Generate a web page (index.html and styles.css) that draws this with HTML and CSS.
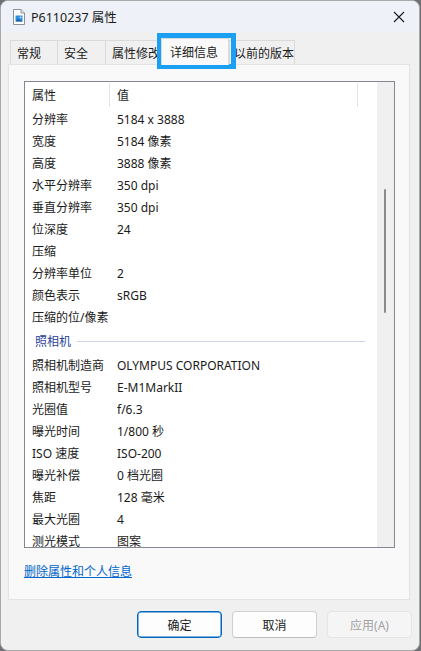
FILE: index.html
```html
<!DOCTYPE html>
<html lang="zh-CN">
<head>
<meta charset="utf-8">
<title>P6110237 属性</title>
<link rel="stylesheet" href="styles.css">
</head>
<body>
<div class="window">
  <div class="titlebar">
    <svg class="app-icon" width="16" height="16" viewBox="0 0 16 16">
      <path d="M2.5 0.5 H10 L13.5 4 V15.5 H2.5 Z" fill="#ffffff" stroke="#8a8f98" stroke-width="1"/>
      <path d="M10 0.5 V4 H13.5" fill="#e9ecf0" stroke="#8a8f98" stroke-width="1"/>
      <rect x="4.5" y="6.5" width="7" height="6" fill="#2f8fdc"/>
      <path d="M4.5 12.5 L7 9.5 L9 11.5 L10 10.5 L11.5 12.5 Z" fill="#1b5fa8"/>
      <circle cx="9.5" cy="8.3" r="0.9" fill="#cfe8ff"/>
    </svg>
    <span class="title">P6110237 属性</span>
    <svg class="close" width="12" height="12" viewBox="0 0 12 12">
      <path d="M1 1 L11 11 M11 1 L1 11" stroke="#1a1a1a" stroke-width="1.1" fill="none"/>
    </svg>
  </div>

  <div class="tabs">
    <div class="tab t1">常规</div>
    <div class="tab t2">安全</div>
    <div class="tab t3">属性修改</div>
    <div class="tab active">详细信息</div>
    <div class="tab t5">以前的版本</div>
  </div>

  <div class="panel">
    <div class="listbox">
      <div class="list-content">
        <div class="list-header">
          <div class="col1 hcell">属性</div>
          <div class="col2 hcell">值</div>
          <div class="hfill"></div>
        </div>
        <div class="row"><span class="col1">分辨率</span><span class="col2">5184 x 3888</span></div>
        <div class="row"><span class="col1">宽度</span><span class="col2">5184 像素</span></div>
        <div class="row"><span class="col1">高度</span><span class="col2">3888 像素</span></div>
        <div class="row"><span class="col1">水平分辨率</span><span class="col2">350 dpi</span></div>
        <div class="row"><span class="col1">垂直分辨率</span><span class="col2">350 dpi</span></div>
        <div class="row"><span class="col1">位深度</span><span class="col2">24</span></div>
        <div class="row"><span class="col1">压缩</span><span class="col2"></span></div>
        <div class="row"><span class="col1">分辨率单位</span><span class="col2">2</span></div>
        <div class="row"><span class="col1">颜色表示</span><span class="col2">sRGB</span></div>
        <div class="row"><span class="col1">压缩的位/像素</span><span class="col2"></span></div>
        <div class="group"><span class="group-label">照相机</span><span class="group-line"></span></div>
        <div class="row"><span class="col1">照相机制造商</span><span class="col2">OLYMPUS CORPORATION</span></div>
        <div class="row"><span class="col1">照相机型号</span><span class="col2">E-M1MarkII</span></div>
        <div class="row"><span class="col1">光圈值</span><span class="col2">f/6.3</span></div>
        <div class="row"><span class="col1">曝光时间</span><span class="col2">1/800 秒</span></div>
        <div class="row"><span class="col1">ISO 速度</span><span class="col2">ISO-200</span></div>
        <div class="row"><span class="col1">曝光补偿</span><span class="col2">0 档光圈</span></div>
        <div class="row"><span class="col1">焦距</span><span class="col2">128 毫米</span></div>
        <div class="row"><span class="col1">最大光圈</span><span class="col2">4</span></div>
        <div class="row"><span class="col1">测光模式</span><span class="col2">图案</span></div>
      </div>
      <div class="scrollbar"><div class="thumb"></div></div>
    </div>
    <a class="link" href="#">删除属性和个人信息</a>
  </div>

  <div class="buttons">
    <button class="btn primary">确定</button>
    <button class="btn">取消</button>
    <button class="btn disabled">应用(A)</button>
  </div>
</div>
<div class="highlight"></div>
</body>
</html>
```

FILE: styles.css
```css
html, body {
  margin: 0;
  padding: 0;
}
body {
  background: #6e7074;
  width: 421px;
  height: 651px;
  overflow: hidden;
  font-family: "Noto Sans", "Noto Sans CJK SC", sans-serif;
  font-size: 12px;
  color: #1a1a1a;
}
.window {
  width: 420px;
  height: 651px;
  box-sizing: border-box;
  border: 1px solid #a8a8a8;
  border-radius: 8px;
  overflow: hidden;
  background: #f0f0f0;
  display: flex;
  flex-direction: column;
}
.titlebar {
  height: 31px;
  flex: none;
  background: #eef2f8;
  display: flex;
  align-items: center;
  padding-left: 10px;
}
.app-icon {
  flex: none;
}
.title {
  margin-left: 4px;
  font-size: 12.5px;
  color: #1a1a1a;
}
.close {
  margin-left: auto;
  margin-right: 14px;
}
.tabs {
  display: flex;
  align-items: flex-end;
  height: 32px;
  flex: none;
  margin-left: 9px;
}
.tab {
  height: 24px;
  box-sizing: border-box;
  border: 1px solid #dadada;
  border-bottom: none;
  border-right: none;
  background: #f0f0f0;
  padding: 0 6px;
  display: flex;
  align-items: center;
  white-space: nowrap;
  overflow: hidden;
}
.t1 { width: 47px; }
.t2 { width: 48px; }
.t3 { width: 56px; }
.t5 { width: 66px; border-right: 1px solid #dadada; padding-left: 4px; }
.tab.active {
  height: 27px;
  width: 68px;
  background: #f9f9f9;
  border-right: 1px solid #dadada;
  padding: 0 8px;
  align-items: flex-start;
  padding-top: 4px;
  position: relative;
  z-index: 1;
  margin-bottom: -1px;
}
.panel {
  flex: none;
  height: 536px;
  box-sizing: border-box;
  margin: 0 9px 0 7px;
  background: #f9f9f9;
  border: 1px solid #e3e3e3;
  padding: 16px 15px 0 15px;
  display: flex;
  flex-direction: column;
}
.listbox {
  width: 371px;
  height: 467px;
  box-sizing: border-box;
  border: 1px solid #828790;
  background: #ffffff;
  display: flex;
  overflow: hidden;
}
.list-content {
  flex: 1;
  overflow: hidden;
}
.list-header {
  height: 26px;
  display: flex;
  align-items: center;
}
.hcell {
  height: 24px;
  display: flex;
  align-items: center;
  box-sizing: border-box;
  border-right: 1px solid #e5e5e5;
}
.list-header .col1 { width: 85px; }
.list-header .col2 { width: 248px; }
.col1 {
  width: 85px;
  padding-left: 7px;
  box-sizing: border-box;
  flex: none;
}
.col2 {
  padding-left: 7px;
  white-space: nowrap;
}
.row {
  height: 22px;
  display: flex;
  align-items: center;
  white-space: nowrap;
}
.group {
  height: 26px;
  display: flex;
  align-items: center;
  padding-left: 10px;
}
.group-label {
  color: #2a3f97;
}
.group-line {
  flex: none;
  width: 288px;
  height: 1px;
  background: #ccd6ec;
  margin-left: 6px;
}
.scrollbar {
  width: 17px;
  flex: none;
  background: #f0f0f0;
  position: relative;
}
.thumb {
  position: absolute;
  left: 7px;
  top: 107px;
  width: 2px;
  height: 124px;
  border-radius: 1px;
  background: #8b8b8b;
}
.link {
  margin-top: 16px;
  color: #0066cc;
  text-decoration: underline;
  align-self: flex-start;
  line-height: 16px;
}
.buttons {
  flex: none;
  display: flex;
  justify-content: flex-end;
  gap: 10px;
  padding: 11px 7px 0 0;
}
.btn {
  width: 85px;
  height: 27px;
  box-sizing: border-box;
  border: 1px solid #d0d0d0;
  border-bottom-color: #bcbcbc;
  border-radius: 4px;
  background: #fdfdfd;
  font-family: "Noto Sans", "Noto Sans CJK SC", sans-serif;
  font-size: 12px;
  color: #1a1a1a;
  padding: 0;
}
.btn.primary {
  border: 1px solid #0067c0;
  box-shadow: inset 0 0 0 0.5px #0067c0;
}
.btn.disabled {
  background: #f5f5f5;
  border-color: #e5e5e5;
  color: #a2a2a2;
}
.highlight {
  position: absolute;
  left: 157px;
  top: 33px;
  width: 79px;
  height: 36px;
  box-sizing: border-box;
  border: 5px solid #1a9ff2;
}
```
